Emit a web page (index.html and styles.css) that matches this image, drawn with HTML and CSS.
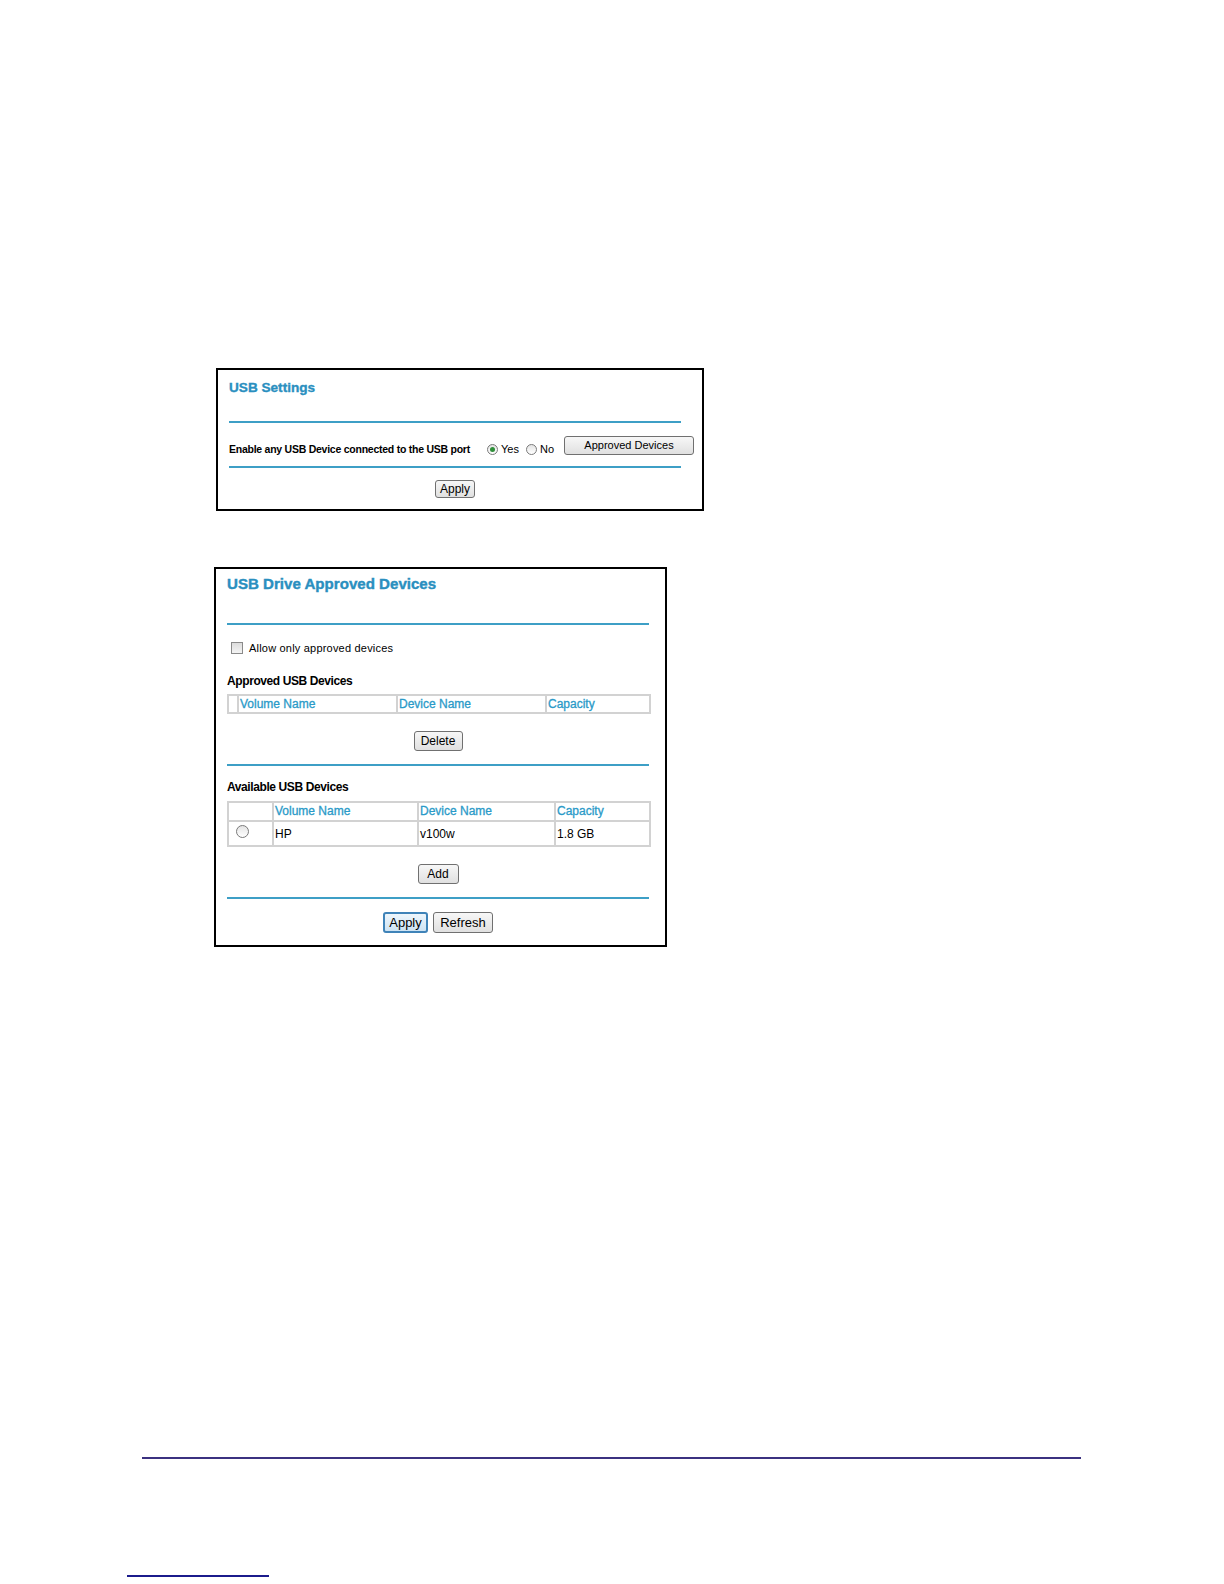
FILE: index.html
```html
<!DOCTYPE html>
<html>
<head>
<meta charset="utf-8">
<link rel="stylesheet" href="styles.css">
</head>
<body>
<div class="page">
  <div class="panel panel-settings">
    <div class="title">USB Settings</div>
    <div class="rule rule-top"></div>
    <div class="setting-row">
      <span class="label-bold">Enable any USB Device connected to the USB port</span>
      <span class="radio-group">
        <span class="radio checked"></span><span class="radio-label">Yes</span>
        <span class="radio"></span><span class="radio-label">No</span>
      </span>
      <span class="btn btn-wide">Approved Devices</span>
    </div>
    <div class="rule rule-mid"></div>
    <div class="btn-row btn-row-apply1"><span class="btn btn-apply1">Apply</span></div>
  </div>

  <div class="panel panel-approved">
    <div class="title title-lg">USB Drive Approved Devices</div>
    <div class="rule rule-top2"></div>
    <div class="check-row"><span class="checkbox"></span><span class="check-label">Allow only approved devices</span></div>
    <div class="section-label">Approved USB Devices</div>
    <table class="grid grid-approved">
      <colgroup>
        <col class="w-c0"><col class="w-c1"><col class="w-c2"><col class="w-c3">
      </colgroup>
      <tr class="head">
        <td></td>
        <td>Volume Name</td>
        <td>Device Name</td>
        <td>Capacity</td>
      </tr>
    </table>
    <div class="btn-row btn-row-delete"><span class="btn btn-delete">Delete</span></div>
    <div class="rule rule-sec"></div>
    <div class="section-label section-label2">Available USB Devices</div>
    <table class="grid grid-available">
      <colgroup>
        <col class="w-a0"><col class="w-a1"><col class="w-a2"><col class="w-a3">
      </colgroup>
      <tr class="head">
        <td></td>
        <td>Volume Name</td>
        <td>Device Name</td>
        <td>Capacity</td>
      </tr>
      <tr class="data">
        <td class="radio-cell"><span class="radio radio-row"></span></td>
        <td>HP</td>
        <td>v100w</td>
        <td>1.8 GB</td>
      </tr>
    </table>
    <div class="btn-row btn-row-add"><span class="btn btn-add">Add</span></div>
    <div class="rule rule-sec2"></div>
    <div class="btn-row btn-row-final">
      <span class="btn btn-default">Apply</span>
      <span class="btn btn-refresh">Refresh</span>
    </div>
  </div>

  <div class="footer-rule"></div>
  <div class="footer-link-rule"></div>
</div>
</body>
</html>
```

FILE: styles.css
```css
html, body {
  margin: 0;
  padding: 0;
  background: #ffffff;
}
.page {
  font-family: "Liberation Sans", Arial, sans-serif;
  color: #000;
  padding-top: 368px;
}
.panel {
  border: 2px solid #000;
  box-sizing: border-box;
  background: #fff;
}
.panel-settings {
  margin-left: 216px;
  width: 488px;
  height: 143px;
  padding: 9px 0 0 11px;
}
.panel-approved {
  margin-left: 214px;
  margin-top: 56px;
  width: 453px;
  height: 380px;
  padding: 5px 0 0 11px;
}
.title {
  color: #2a8fbf;
  font-weight: bold;
  font-size: 13.6px;
  line-height: 18px;
  -webkit-text-stroke: 0.35px #2a8fbf;
}
.title-lg {
  font-size: 15.1px;
  line-height: 20px;
  -webkit-text-stroke: 0.4px #2a8fbf;
}
.rule {
  height: 2px;
  background: #3d9fc6;
}
.rule-top {
  width: 452px;
  margin-top: 24px;
}
.setting-row {
  display: flex;
  align-items: center;
  height: 20px;
  margin-top: 13px;
}
.label-bold {
  font-size: 10.5px;
  font-weight: bold;
  letter-spacing: -0.25px;
  width: 258px;
  flex: none;
  white-space: nowrap;
  padding-top: 6px;
}
.radio-group {
  display: flex;
  align-items: center;
  font-size: 11px;
  width: 77px;
  flex: none;
  padding-top: 6px;
}
.radio {
  display: inline-block;
  width: 9px;
  height: 9px;
  border: 1px solid #7a7a7a;
  border-radius: 50%;
  background: linear-gradient(#e4e4e4, #ffffff);
  position: relative;
  flex: none;
}
.radio.checked::after {
  content: "";
  position: absolute;
  left: 2px;
  top: 2px;
  width: 5px;
  height: 5px;
  border-radius: 50%;
  background: #2f8f3a;
}
.radio-label {
  margin: 0 7px 0 3px;
}
.btn {
  display: inline-flex;
  align-items: center;
  justify-content: center;
  box-sizing: border-box;
  height: 20px;
  padding: 0 4px;
  border: 1px solid #707070;
  border-radius: 3px;
  background: linear-gradient(#f7f7f7, #e0e0e0);
  font-size: 12px;
  color: #000;
  flex: none;
}
.btn-wide {
  width: 130px;
  height: 19px;
  font-size: 11px;
  align-self: flex-start;
  padding-bottom: 2px;
}
.rule-mid {
  width: 452px;
  margin-top: 10px;
}
.btn-row {
  display: flex;
  justify-content: center;
  gap: 5px;
}
.btn-row-apply1 {
  width: 452px;
  margin-top: 12px;
}
.btn-apply1 {
  width: 40px;
  height: 18px;
}
.rule-top2 {
  width: 422px;
  margin-top: 29px;
}
.check-row {
  display: flex;
  align-items: center;
  margin-top: 16px;
  margin-left: 4px;
  height: 14px;
}
.checkbox {
  display: inline-block;
  width: 10px;
  height: 10px;
  border: 1px solid #8a8a8a;
  background: linear-gradient(#dcdcdc, #f4f4f4);
  margin-right: 6px;
}
.check-label {
  font-size: 11px;
  letter-spacing: 0.2px;
}
.section-label {
  font-size: 12px;
  font-weight: bold;
  letter-spacing: -0.4px;
  margin-top: 19px;
  line-height: 14px;
}
.grid {
  border-collapse: collapse;
  table-layout: fixed;
  width: 422px;
  font-size: 12px;
  margin-top: 6px;
}
.grid td {
  border: 2px solid #d2d2d2;
  padding: 0 1px;
  height: 16px;
  line-height: 16px;
  vertical-align: middle;
  white-space: nowrap;
  overflow: hidden;
}
.grid .head td {
  color: #2a9ac8;
  -webkit-text-stroke: 0.3px #2a9ac8;
}
.w-c0 { width: 10px; }
.w-c1 { width: 159px; }
.w-c2 { width: 149px; }
.w-c3 { width: 104px; }
.btn-row-delete {
  width: 422px;
  margin-top: 17px;
}
.btn-delete {
  width: 49px;
}
.rule-sec {
  width: 422px;
  margin-top: 13px;
}
.section-label2 {
  margin-top: 14px;
}
.grid-available {
  margin-top: 7px;
}
.w-a0 { width: 45px; }
.w-a1 { width: 145px; }
.w-a2 { width: 137px; }
.w-a3 { width: 95px; }
.grid-available .head td {
  height: 17px;
  line-height: 17px;
}
.grid-available .data td {
  height: 22px;
  line-height: 22px;
}
.grid .radio-cell {
  padding: 0 0 0 7px;
  line-height: 0;
}
.radio-row {
  width: 11px;
  height: 11px;
  margin-top: 3px;
}
.btn-row-add {
  width: 422px;
  margin-top: 17px;
}
.btn-add {
  width: 41px;
  height: 20px;
}
.rule-sec2 {
  width: 422px;
  margin-top: 13px;
}
.btn-row-final {
  width: 422px;
  margin-top: 13px;
}
.btn-default {
  width: 45px;
  height: 21px;
  border: 2px solid #3f83b8;
  background: linear-gradient(#eef6fc, #cde3f3);
  font-size: 13px;
}
.btn-refresh {
  width: 60px;
  height: 21px;
  font-size: 13px;
}
.footer-rule {
  margin-left: 142px;
  margin-top: 510px;
  width: 939px;
  height: 2px;
  background: #3b3180;
}
.footer-link-rule {
  margin-left: 127px;
  margin-top: 116px;
  width: 142px;
  height: 2px;
  background: #1b1b8c;
}
```
